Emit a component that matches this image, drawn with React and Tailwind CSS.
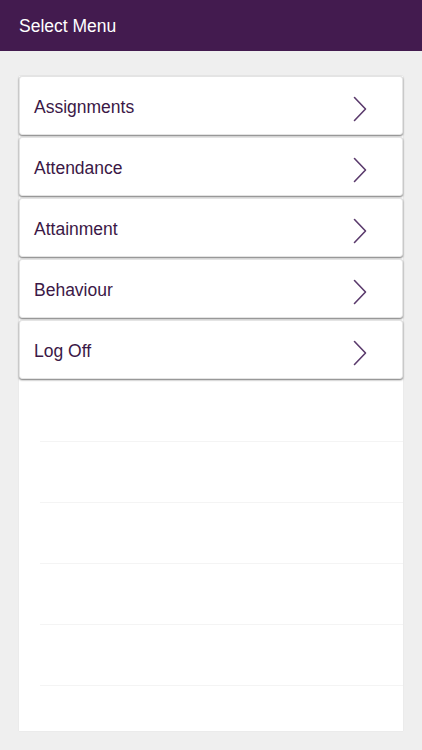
import React from "react";

const items = ["Assignments", "Attendance", "Attainment", "Behaviour", "Log Off"];

function Chevron() {
  return (
    <svg width="16" height="26" viewBox="0 0 16 26" className="shrink-0 mt-[6px]">
      <path d="M2.5 1.5 L13.5 13 L2.5 24.5" fill="none" stroke="#5a3a6c" strokeWidth="1.6" strokeLinecap="round" strokeLinejoin="round" />
    </svg>
  );
}

export default function App() {
  return (
    <div className="w-[422px] h-[750px] bg-[#efefef] flex flex-col overflow-hidden" style={{ fontFamily: '"Liberation Sans", Arial, sans-serif' }}>
      <div className="h-[51px] bg-[#431b4f] flex items-center px-[19px] pt-[2px] shrink-0">
        <span className="text-white text-[17.5px]">Select Menu</span>
      </div>
      <div className="px-[19px] pt-[25px]">
        <div className="h-[655px] bg-white flex flex-col shadow-[0_0_1px_rgba(0,0,0,0.1)]">
          <div className="flex flex-col">
            {items.map((t) => (
              <div key={t} className="h-[61px] pb-[2px]">
                <div className="h-[59px] bg-white rounded-[3px] border border-[#e4e4e4] shadow-[0_1px_2px_rgba(0,0,0,0.55)] flex items-center justify-between pl-[14px] pr-[34px]">
                  <span className="text-[17.5px] text-[#3b1846] mt-[3px]">{t}</span>
                  <Chevron />
                </div>
              </div>
            ))}
          </div>
          {[0, 1, 2, 3, 4].map((i) => (
            <div key={i} className="h-[61px] shrink-0 ml-[21px] border-b border-[#f4f4f4]" />
          ))}
        </div>
      </div>
    </div>
  );
}
